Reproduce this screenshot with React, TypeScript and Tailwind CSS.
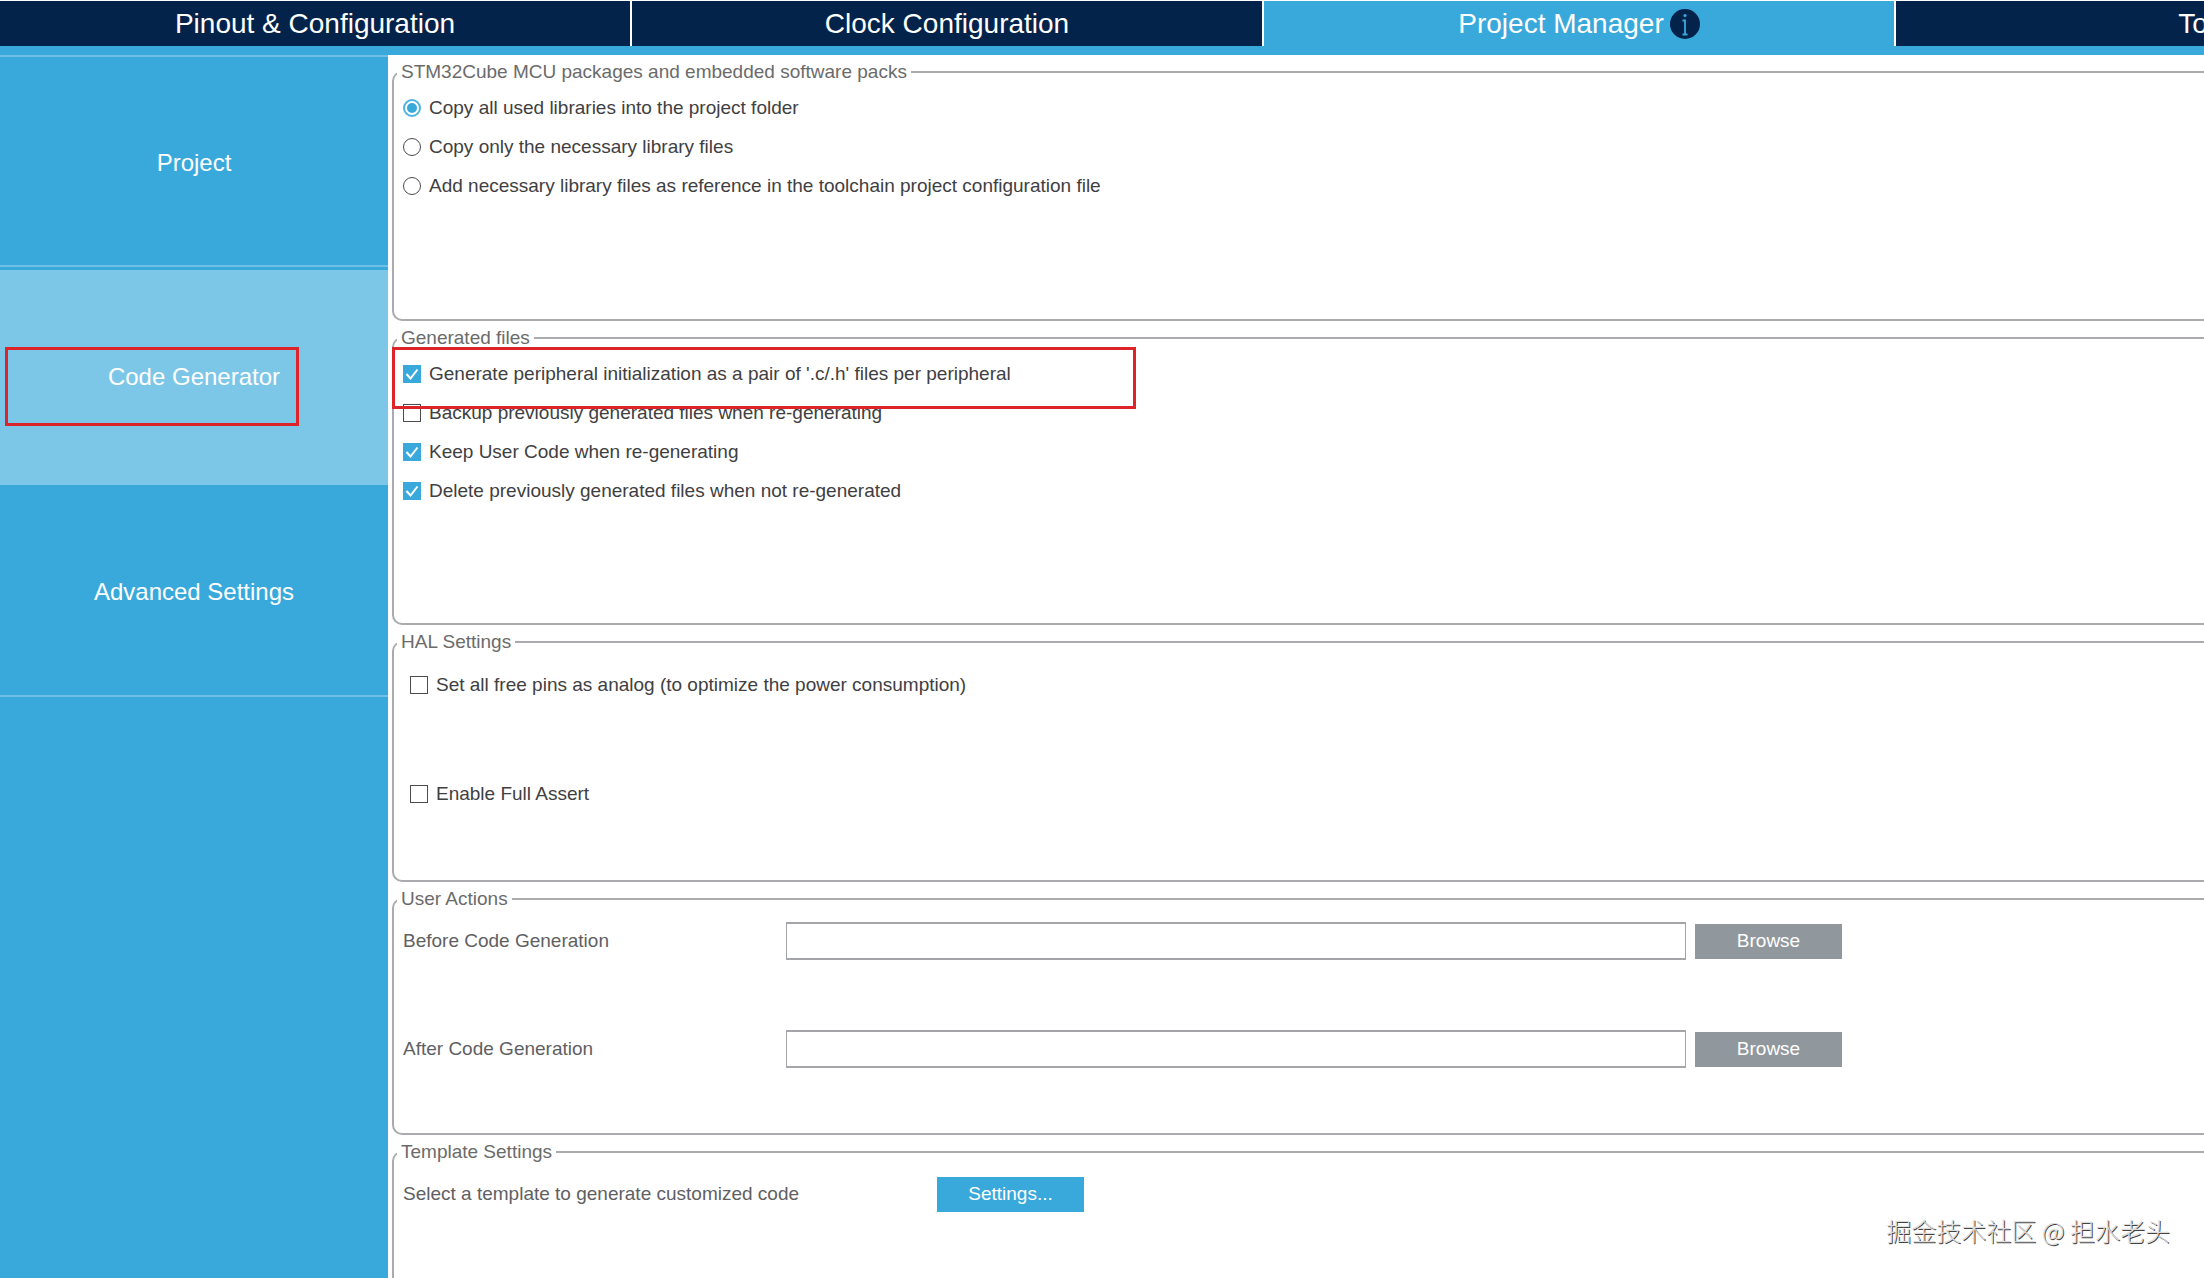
import React, { useState } from 'react';

const TABS = ['Pinout & Configuration', 'Clock Configuration', 'Project Manager', 'Tools'];
const SECTIONS = ['Project', 'Code Generator', 'Advanced Settings'];

const LIBRARY_OPTIONS = [
  'Copy all used libraries into the project folder',
  'Copy only the necessary library files',
  'Add necessary library files as reference in the toolchain project configuration file',
];

const FILE_OPTIONS = [
  { label: "Generate peripheral initialization as a pair of '.c/.h' files per peripheral", checked: true, marked: true },
  { label: 'Backup previously generated files when re-generating', checked: false },
  { label: 'Keep User Code when re-generating', checked: true },
  { label: 'Delete previously generated files when not re-generated', checked: true },
];

const InfoIcon = () => (
  <svg className="w-[30px] h-[30px]" viewBox="0 0 30 30">
    <circle cx="15" cy="15" r="15" fill="#03234b" />
    <circle cx="15" cy="6.5" r="1.6" fill="#39a9dc" />
    <path d="M12.5 11.5H15V25M12.5 25.5H17.5" fill="none" stroke="#39a9dc" strokeWidth="1.8" />
  </svg>
);

interface GroupProps {
  title: string;
  className?: string;
  children: React.ReactNode;
}

const Group: React.FC<GroupProps> = ({ title, className = '', children }) => (
  <fieldset className={`min-w-0 rounded-l-[10px] border-2 border-r-0 border-[#a9abae] pl-[3px] ${className}`}>
    <legend className="px-1 leading-5 text-[#6b6b6b]">{title}</legend>
    {children}
  </fieldset>
);

const Radio: React.FC<{ label: string; checked: boolean; onChange: () => void }> = ({ label, checked, onChange }) => (
  <label className="flex h-[39px] items-center gap-2">
    <span className="relative flex h-[18px] w-[18px] shrink-0">
      <input
        type="radio"
        name="libraries"
        checked={checked}
        onChange={onChange}
        className="h-[18px] w-[18px] appearance-none rounded-full border border-[#4c4c4c] bg-white checked:border-2 checked:border-[#4fb3e0]"
      />
      {checked && <span className="pointer-events-none absolute left-1 top-1 h-[10px] w-[10px] rounded-full bg-[#39a9dc]" />}
    </span>
    <span className="pt-[2px]">{label}</span>
  </label>
);

const Checkbox: React.FC<{ label: string; defaultChecked?: boolean }> = ({ label, defaultChecked = false }) => {
  const [checked, setChecked] = useState(defaultChecked);
  return (
    <label className="flex h-[39px] items-center gap-2">
      <span className="relative flex h-[18px] w-[18px] shrink-0">
        <input
          type="checkbox"
          checked={checked}
          onChange={(e) => setChecked(e.target.checked)}
          className="h-[18px] w-[18px] appearance-none border border-[#4c4c4c] bg-white checked:border-[#39a9dc] checked:bg-[#39a9dc]"
        />
        {checked && (
          <svg className="pointer-events-none absolute inset-0" viewBox="0 0 18 18" fill="none" stroke="white" strokeWidth="2">
            <path d="M3.5 9L7.5 13.5L14.5 4.5" />
          </svg>
        )}
      </span>
      <span className="pt-[2px]">{label}</span>
    </label>
  );
};

const ActionRow: React.FC<{ id: string; label: string }> = ({ id, label }) => (
  <div className="flex items-center gap-[9px]">
    <label htmlFor={id} className="w-[374px] shrink-0 text-[#5f6062]">{label}</label>
    <input id={id} type="text" className="h-[38px] min-w-0 max-w-[900px] flex-1 border-x border-y-2 border-[#a3a5a8] bg-white px-2" />
    <button type="button" className="h-[35px] w-[147px] shrink-0 bg-[#90989d] text-white">Browse</button>
  </div>
);

export default function App() {
  const [library, setLibrary] = useState(0);

  return (
    <div className="relative flex min-h-screen flex-col overflow-hidden bg-white font-['Liberation_Sans',Arial,sans-serif] text-[19px] text-[#3f4042]">
      {/* Top tabs, the last one runs past the right edge */}
      <header className="overflow-hidden border-b-[9px] border-[#39a9dc] pt-px">
        <nav className="flex h-[45px] w-[114.7%] text-[28px] text-white">
          {TABS.map((tab, i) => (
            <button
              key={tab}
              type="button"
              className={`flex flex-1 items-center justify-center gap-[6px] border-r-2 border-white ${i === 2 ? 'bg-[#39a9dc]' : 'bg-[#03234b]'}`}
            >
              {tab}
              {i === 2 && <InfoIcon />}
            </button>
          ))}
        </nav>
      </header>

      <div className="flex flex-1">
        <aside className="w-[388px] shrink-0 bg-[#39a9dc] text-[24px] text-white">
          {SECTIONS.map((section, i) => (
            <div key={section} className={`relative h-[215px] pb-[3px] ${i === 1 ? 'bg-[#7cc7e8]' : ''}`}>
              <button
                type="button"
                className={`h-full w-full border-b-2 pt-1 ${i === 1 ? 'border-transparent' : 'border-[#6fc0e6]'} ${i === 0 ? 'border-t-2' : ''}`}
              >
                {section}
              </button>
              {i === 1 && <div className="pointer-events-none absolute left-[5px] top-[77px] h-[79px] w-[294px] border-[3px] border-[#dd2429]" />}
            </div>
          ))}
        </aside>

        <main className="flex min-w-0 flex-1 flex-col gap-[7px] pl-1 pt-[7px]">
          <Group title="STM32Cube MCU packages and embedded software packs" className="min-h-[259px]">
            <div className="pl-[6px] pt-[6px]">
              {LIBRARY_OPTIONS.map((option, i) => (
                <Radio key={option} label={option} checked={library === i} onChange={() => setLibrary(i)} />
              ))}
            </div>
          </Group>

          <Group title="Generated files" className="min-h-[297px]">
            <div className="pl-[6px] pt-[6px]">
              {FILE_OPTIONS.map((option) => (
                <div key={option.label} className="relative">
                  <Checkbox label={option.label} defaultChecked={option.checked} />
                  {option.marked && (
                    <div className="pointer-events-none absolute -left-[11px] -top-[7px] z-10 h-[62px] w-[744px] border-[3px] border-[#dd2429]" />
                  )}
                </div>
              ))}
            </div>
          </Group>

          <Group title="HAL Settings" className="min-h-[250px]">
            <div className="flex flex-col gap-[70px] pl-[13px] pt-[13px]">
              <Checkbox label="Set all free pins as analog (to optimize the power consumption)" />
              <Checkbox label="Enable Full Assert" />
            </div>
          </Group>

          <Group title="User Actions" className="min-h-[246px]">
            <div className="flex flex-col gap-[70px] pl-[6px] pt-[13px]">
              <ActionRow id="before" label="Before Code Generation" />
              <ActionRow id="after" label="After Code Generation" />
            </div>
          </Group>

          <Group title="Template Settings" className="flex-1 rounded-bl-none border-b-0">
            <div className="flex h-[51px] items-center pl-[6px] pt-[13px]">
              <span className="w-[534px] shrink-0 text-[#5f6062]">Select a template to generate customized code</span>
              <button type="button" className="h-[35px] w-[147px] bg-[#39a9dc] text-white">Settings...</button>
            </div>
          </Group>
        </main>
      </div>

      <p className="absolute bottom-[30px] right-[34px] font-['Noto_Sans_CJK_SC',sans-serif] text-[25px] font-light leading-9 text-[#dcdcdc] [text-shadow:1px_1px_0_#444]">
        掘金技术社区 @ 担水老头
      </p>
    </div>
  );
}
